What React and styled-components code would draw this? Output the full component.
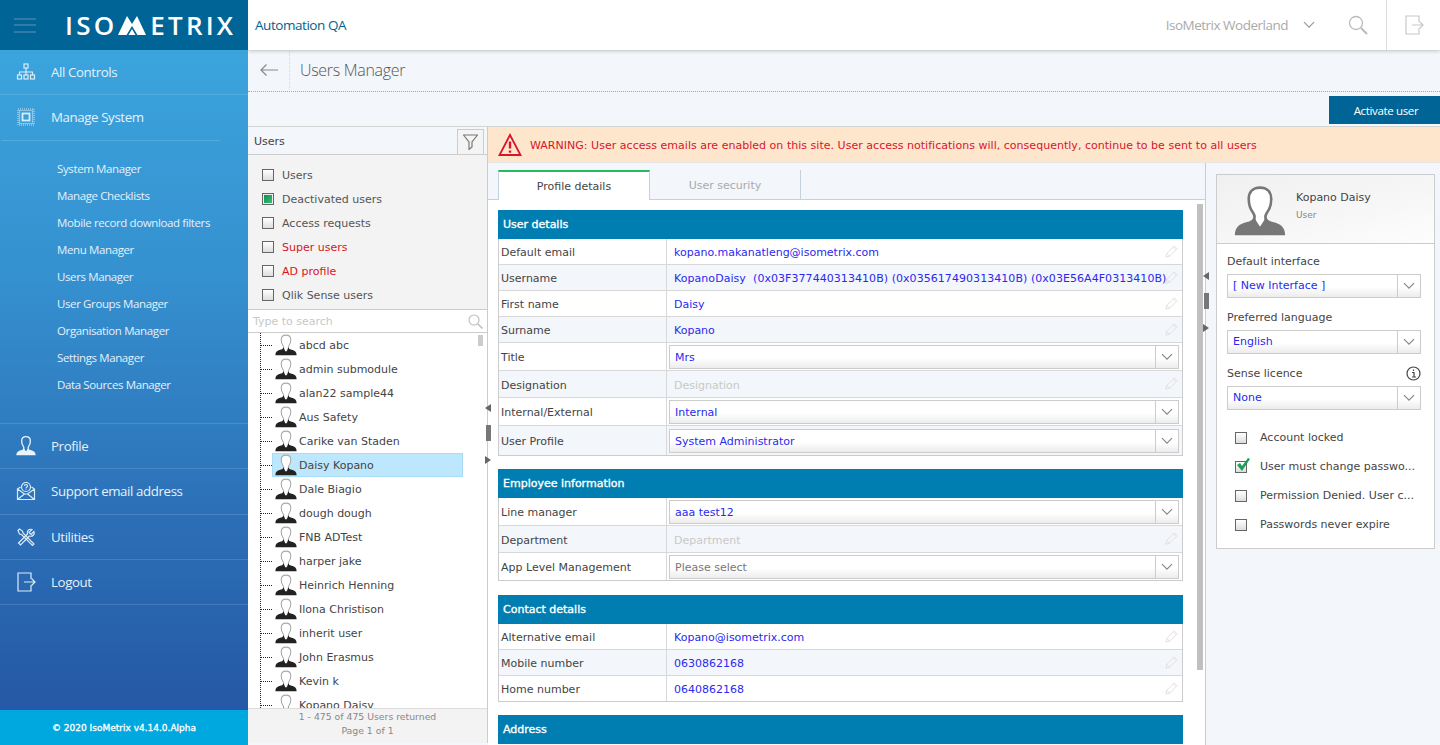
import React from "react";
import styled, { createGlobalStyle } from "styled-components";

const Global = createGlobalStyle`
  html, body { margin: 0; padding: 0; height: 100%; overflow: hidden; background: #f3f6fa; }
  * { box-sizing: border-box; }
  body { font-family: "DejaVu Sans", Verdana, sans-serif; font-size: 11px; color: #444; }
`;

const Shell = styled.div`display: flex; width: 1440px; height: 745px; overflow: hidden;`;
const Side = styled.aside`width: 248px; flex: none; display: flex; flex-direction: column; position: relative; z-index: 3;`;
const Brand = styled.div`height: 50px; background: #006596; display: flex; align-items: center; padding-left: 14px;`;
const Burger = styled.div`width: 22px; height: 15px; display: flex; flex-direction: column; justify-content: space-between; margin-right: 29px;
  span { display: block; height: 2px; background: #2f7ca6; }`;
const Logo = styled.div`display: flex; align-items: center; color: #fff; font-family: "Open Sans", sans-serif; font-weight: 600; font-size: 26px; letter-spacing: 3.2px; line-height: 1;
  svg { margin: 0 4px 0 1px; }`;
const Nav = styled.nav`flex: 1; background: linear-gradient(#3ba4dd, #3590cf 35%, #2c70b8 70%, #2558a6); font-family: "Open Sans", sans-serif; color: #e4f1fa;`;
const NavItem = styled.div`height: ${p => p.$h || 45}px; display: flex; align-items: center; padding: 0 0 ${p => p.$h ? 1 : 0}px 16px; font-size: 13.3px; letter-spacing: -0.4px; border-bottom: 1px solid ${p => p.$plain ? "transparent" : "rgba(255,255,255,.13)"};
  svg { width: 20px; height: 20px; margin-right: 15px; flex: none; }`;
const Rule = styled.div`height: 1px; width: 218px; margin-left: 2px; background: rgba(255,255,255,.15);`;
const SubMenu = styled.div`padding: 14px 0 25px 57px; border-bottom: 1px solid rgba(255,255,255,.13);`;
const SubItem = styled.div`height: 27px; line-height: 27px; font-size: 11.5px; letter-spacing: -0.38px; white-space: nowrap;`;
const Copy = styled.div`height: 35px; background: #00a8e0; color: #fff; font-size: 9px; -webkit-text-stroke: 0.3px #fff; font-family: "DejaVu Sans", sans-serif; display: flex; align-items: center; justify-content: center;`;

const Main = styled.main`flex: 1; min-width: 0; display: flex; flex-direction: column;`;
const Header = styled.header`height: 50px; flex: none; background: #fff; display: flex; align-items: center; padding-left: 7px; box-shadow: 0 1px 4px rgba(0,0,0,.22); position: relative; z-index: 2;`;
const Org = styled.div`flex: 1; font-family: "Open Sans", sans-serif; font-size: 13.5px; letter-spacing: -0.45px; color: #00628f; padding-bottom: 1px;`;
const Tenant = styled.div`font-family: "Open Sans", sans-serif; font-size: 13.5px; letter-spacing: -0.5px; color: #aaa; margin-right: 14px;`;
const HeadIcon = styled.div`display: flex; align-items: center; justify-content: center; width: ${p => p.$w}px; height: 50px; border-left: ${p => p.$line ? "1px solid #ddd" : "none"}; margin-right: ${p => p.$mr || 0}px;`;

const SubHead = styled.div`height: 42px; flex: none; display: flex; align-items: center; background: #f3f6fa; border-bottom: 1px dotted #9aa; `;
const Back = styled.div`width: 42px; height: 100%; display: flex; align-items: center; justify-content: center; border-right: 1px dotted #cdd; margin-top: -2px;`;
const Title = styled.h1`margin: 0 0 1px 10px; font: 300 16px "Open Sans", sans-serif; letter-spacing: -0.3px; color: #555;`;
const Actions = styled.div`height: 35px; flex: none; display: flex; justify-content: flex-end; padding-top: 4px; background: #f3f6fa; border-bottom: 1px solid #d4d4d4;`;
const Activate = styled.button`width: 111px; height: 28px; border: 0; padding: 0 0 0 3px; background: #006596; color: #fff; font: 400 11.5px "Open Sans", sans-serif; letter-spacing: -0.35px;`;

const Work = styled.div`flex: 1; min-height: 0; display: flex; position: relative;`;
const Left = styled.section`width: 240px; flex: none; display: flex; flex-direction: column; background: #fff; border-right: 1px solid #ccc; height: 616px; position: relative;`;
const LeftHead = styled.div`height: 28px; flex: none; display: flex; align-items: center; justify-content: space-between; padding: 1px 3px 0 6px; background: #f3f6fa; border-bottom: 1px solid #ccc;`;
const FilterTab = styled.div`width: 27px; height: 25px; margin-top: 0; margin-bottom: -1px; background: #f4f4f4; border: 1px solid #ccc; border-bottom: 0; display: flex; align-items: center; justify-content: center;`;
const Filters = styled.div`height: 155px; flex: none; background: #f3f3f3; padding-top: 8px; border-bottom: 1px solid #ccc;`;
const FilterRow = styled.label`height: 24px; display: flex; align-items: center; padding-left: 14px; gap: 8px; color: ${p => p.$red ? "#d9141e" : "#555"};`;
const Box = styled.span`width: 12px; height: 12px; flex: none; border: 1px solid #666; background: ${p => p.$on ? "linear-gradient(135deg,#0a8a4a,#3cc47c)" : "linear-gradient(#fff,#ddd)"}; ${p => p.$on ? "box-shadow: inset 0 0 0 1px #eee;" : ""} position: relative;`;
const Tick = styled.svg`position: absolute; left: -1px; top: -5px; width: 17px; height: 16px;`;
const Search = styled.div`height: 23px; flex: none; display: flex; align-items: center; justify-content: space-between; padding: 0 4px 0 5px; border-bottom: 1px solid #ccc; color: #c8c8c8;`;
const Tree = styled.div`flex: 1; min-height: 0; overflow: hidden; position: relative; margin-left: 12px; border-left: 1px dotted #222;`;
const TreeThumb = styled.div`position: absolute; right: 4px; top: 2px; width: 5px; height: 11px; background: #ccc;`;
const TreeRow = styled.div`height: 24px; display: flex; align-items: center; position: relative; width: 203px; padding-left: 14px; color: #444;
  &::before { content: ""; position: absolute; left: 0; top: 12px; width: 11px; border-top: 1px dotted #222; }
  ${p => p.$sel ? `&::after { content: ""; position: absolute; left: 11px; top: 0; bottom: 0; right: 1px; background: #bde7fd; border: 1px solid #a9dcf7; z-index: 0; }` : ""}
  > * { position: relative; z-index: 1; }
  svg { margin-right: 2px; }`;
const LeftFoot = styled.div`height: 35px; flex: none; background: #f3f3f3; border-top: 1px solid #ddd; color: #888; font-size: 9.3px; text-align: center; line-height: 14px; padding-top: 1px;`;

const Splitter = styled.div`position: absolute; left: ${p => p.$x}px; top: ${p => p.$y}px; z-index: 4; display: flex; flex-direction: column; align-items: center; width: 8px;`;
const Tri = styled.span`width: 0; height: 0; border-top: 4.5px solid transparent; border-bottom: 4.5px solid transparent; ${p => p.$dir === "l" ? "border-right: 6px solid #666;" : "border-left: 6px solid #666;"}`;
const Handle = styled.span`width: 5px; height: 16px; background: #777; margin: 13px 0 15px;`;

const Center = styled.section`flex: 1; min-width: 0; display: flex; flex-direction: column;`;
const Warning = styled.div`height: 36px; flex: none; background: #fde6cb; color: #d9142b; display: flex; align-items: center; padding: 1px 0 0 10px; gap: 8px; border-bottom: 1px solid #e6e6e6; letter-spacing: 0.025px;`;
const Under = styled.div`flex: 1; min-height: 0; display: flex;`;
const FormCol = styled.div`width: 718px; flex: none; display: flex; flex-direction: column; border-right: 1px solid #ccc; position: relative;`;
const Tabs = styled.div`height: 37px; flex: none; background: #f3f6fa; padding: 7px 0 0 10px; display: flex; border-bottom: 1px solid #c4d2dc;`;
const Tab = styled.div`width: ${p => p.$w}px; height: 30px; display: flex; align-items: center; justify-content: center; color: ${p => p.$on ? "#444" : "#aaa"}; ${p => p.$on ? "background:#fff; border-top: 2px solid #27b860; border-left: 1px solid #c4d2dc; border-right: 1px solid #c4d2dc;" : "border-right: 1px solid #c4d2dc;"}`;
const Form = styled.div`flex: 1; min-height: 0; overflow: hidden; background: #fff; padding: 10px 0 0 10px; position: relative;`;
const FormThumb = styled.div`position: absolute; right: 2px; top: 4px; width: 6px; height: 466px; background: #c0c0c0;`;
const Block = styled.div`width: 685px; margin-bottom: ${p => p.$mb || 13}px;`;
const BlockHead = styled.div`height: 29px; background: #007eb1; color: #fff; -webkit-text-stroke: 0.35px #fff; display: flex; align-items: center; padding-left: 5px;`;
const Rows = styled.div`border: 1px solid #ccc; border-top: 0;`;
const Row = styled.div`height: ${p => p.$h || 26}px; display: flex; border-bottom: 1px solid #d8d8d8; background: ${p => p.$alt ? "#f3f6fa" : "#fff"}; &:last-child { border-bottom: 0; }`;
const Label = styled.div`width: 168px; flex: none; padding: 2px 0 0 2px; display: flex; align-items: center; border-right: 1px solid #d8d8d8; color: #444;`;
const Value = styled.div`flex: 1; min-width: 0; position: relative; display: flex; align-items: center; padding: ${p => p.$ctl ? "0" : "2px"} 0 0 7px; white-space: nowrap; color: ${p => p.$muted ? "#c9c9c9" : "#2a2aee"}; letter-spacing: ${p => p.$wide ? "0.055px" : "0"};`;
const Pencil = styled.svg`position: absolute; right: 3px; top: 50%; margin-top: -8px; width: 15px; height: 15px; fill: none; stroke: #e6dcdc;`;
const SelectBox = styled.div`height: ${p => p.$h || 24}px; flex: 1; margin: ${p => p.$m || "0"}; display: flex; align-items: center; border: 1px solid #ccc; background: linear-gradient(#fff 55%, #ececec); color: ${p => p.$muted ? "#777" : "#2a2aee"}; padding-left: 5px; min-width: 0;`;
const SelectText = styled.span`flex: 1; min-width: 0; position: relative; top: ${p => p.$shift || 0}px;`;
const Caret = styled.span`width: 23px; height: 100%; flex: none; display: flex; align-items: center; justify-content: center; border-left: 1px solid #ccc;`;

const Rail = styled.aside`flex: 1; min-width: 0; padding: 11px 5px 0 10px; background: #f3f6fa;`;
const Card = styled.div`height: 375px; background: #fff; border: 1px solid #ccc;`;
const CardHead = styled.div`height: 69px; display: flex; border-bottom: 1px solid #ccc; background: linear-gradient(165deg,#f0f0f0 0%, #f7f7f7 60%, #fdfdfd 100%); padding: 10px 0 0 17px;`;
const CardName = styled.div`margin-left: 10px; padding-top: 4px; color: #444; line-height: 18px; small { display: block; font-size: 9px; line-height: 16px; color: #888; }`;
const CardBody = styled.div`padding: 8px 13px 0 10px;`;
const FieldLabel = styled.div`height: 22px; padding: 0 0 3px; display: flex; align-items: center; justify-content: space-between; color: #444; margin-top: ${p => p.$mt || 0}px;`;
const CheckList = styled.div`padding: 13px 0 0 8px;`;
const CheckRow = styled.div`height: 29px; display: flex; align-items: center; gap: 13px; color: #444; white-space: nowrap;`;

const Avatar = ({ size = 20, head = "#fff", stroke = "#aaa", body = "#222", sw = 3 }) => (
  <svg width={size} height={size} viewBox="0 0 60 60" style={{ flex: "none" }}>
    <path d="M30 3c-9 0-13 6-13 13 0 7 1 11 5 16 2 3 2 6 1 8l7 11 7-11c-1-2-1-5 1-8 4-5 5-9 5-16 0-7-4-13-13-13z" fill={head} stroke={stroke} strokeWidth={sw} />
    <path d="M1 58c0-9 5-13 13-15 5-1 8-3 10-7 1 6 3 12 6 12s5-6 6-12c2 4 5 6 10 7 8 2 13 6 13 15z" fill={body} />
  </svg>
);
const Chev = ({ c = "#888", w = 12 }) => (
  <svg width={w} height={w * 0.6} viewBox="0 0 12 7" fill="none" stroke={c} strokeWidth="1.2"><path d="M1 1l5 5 5-5" /></svg>
);
const PencilIcon = () => (
  <Pencil viewBox="0 0 16 16"><path d="M2 14l1-4 8-8 3 3-8 8z M10 3l3 3 M3 10l3 3" /></Pencil>
);
const Select = ({ children, muted }) => (
  <SelectBox $muted={muted} $h={24} $m="0 3px 0 -5px"><SelectText $shift={1}>{children}</SelectText><Caret><Chev /></Caret></SelectBox>
);

const I = { fill: "none", stroke: "#dcecf7", strokeWidth: 1.2, viewBox: "0 0 20 20" };
const IconControls = () => <svg {...I}><rect x="8" y="2" width="4" height="4" /><path d="M10 6v4M3.5 13v-3h13v3M10 10v3" /><rect x="1.5" y="13" width="4" height="4" /><rect x="8" y="13" width="4" height="4" /><rect x="14.5" y="13" width="4" height="4" /></svg>;
const IconChip = () => <svg {...I}><rect x="6.500" y="6.500" width="7" height="7" strokeWidth="1.8" /><rect x="3.500" y="3.500" width="13" height="13" strokeDasharray="1 1" /><rect x="2" y="2" width="16" height="16" strokeDasharray="1 1" strokeWidth=".9" /></svg>;
const IconProfile = () => <svg viewBox="0 0 60 60"><path d="M30 2c-9 0-13 6-13 13 0 7 1 11 5 16 2 3 2 6 1 8l7 11 7-11c-1-2-1-5 1-8 4-5 5-9 5-16 0-7-4-13-13-13z" fill="none" stroke="#e8f3fb" strokeWidth="4" /><path d="M1 58c0-9 5-13 13-15 5-1 8-3 10-7 1 6 3 12 6 12s5-6 6-12c2 4 5 6 10 7 8 2 13 6 13 15z" fill="#e8f3fb" /></svg>;
const IconMail = () => <svg {...I}><path d="M1.5 8v10.5h17V8l-3-2M4.5 6l-3 2 7 5h3l7-5M1.5 18.5l7-5.5M18.5 18.5l-7-5.5" /><circle cx="10" cy="6" r="4.5" /><path d="M8.5 5c0-2 3-2 3 0 0 1-1.500 1-1.500 2.500M10 8.500v.5" /></svg>;
const IconTools = () => <svg {...I}><path d="M2 3.500l1.500-1.500 3 2 .5 2 11 11-1.500 1.500-11-11-2-.5z" /><path d="M18 4.500l-3 3-2-2 3-3c-3-1-5.500 1.500-4.500 4.500l-9 9 2 2 9-9c3 1 5.500-1.500 4.500-4.500z" /></svg>;
const IconLogout = () => <svg {...I}><path d="M15 7V1H2v18h13v-6" /><path d="M8 10h11M15.500 6.500L19 10l-3.500 3.500" /></svg>;

const subs = ["System Manager", "Manage Checklists", "Mobile record download filters", "Menu Manager", "Users Manager", "User Groups Manager", "Organisation Manager", "Settings Manager", "Data Sources Manager"];
const filters = [["Users"], ["Deactivated users", false, true], ["Access requests"], ["Super users", true], ["AD profile", true], ["Qlik Sense users"]];
const users = ["abcd abc", "admin submodule", "alan22 sample44", "Aus Safety", "Carike van Staden", "Daisy Kopano", "Dale Biagio", "dough dough", "FNB ADTest", "harper jake", "Heinrich Henning", "Ilona Christison", "inherit user", "John Erasmus", "Kevin k", "Kopano Daisy"];

export default function App() {
  return (
    <Shell>
      <Global />
      <Side>
        <Brand>
          <Burger><span /><span /><span /></Burger>
          <Logo>ISO
            <svg width="28" height="19" viewBox="0 0 28 19"><path d="M0 19L9 0l5 8 5-8 9 19H19.500l-5.500-9-5.500 9z" fill="#fff" /><path d="M10.500 19l3.500-6 3.500 6z" fill="#fff" /></svg>
            ETRIX</Logo>
        </Brand>
        <Nav>
          <NavItem><IconControls />All Controls</NavItem>
          <NavItem $plain><IconChip />Manage System</NavItem>
          <Rule />
          <SubMenu>{subs.map(s => <SubItem key={s}>{s}</SubItem>)}</SubMenu>
          <NavItem><IconProfile />Profile</NavItem>
          <NavItem $h={46}><IconMail />Support email address</NavItem>
          <NavItem><IconTools />Utilities</NavItem>
          <NavItem><IconLogout />Logout</NavItem>
        </Nav>
        <Copy>© 2020 IsoMetrix v4.14.0.Alpha</Copy>
      </Side>
      <Main>
        <Header>
          <Org>Automation QA</Org>
          <Tenant>IsoMetrix Woderland</Tenant>
          <HeadIcon $w={14} $mr={32}><Chev c="#999" w={12} /></HeadIcon>
          <HeadIcon $w={20} $mr={18}>
            <svg width="20" height="20" viewBox="0 0 20 20" fill="none" stroke="#bbb" strokeWidth="1.300"><circle cx="8" cy="8" r="6.500" /><path d="M13 13l6 6" strokeWidth="2" /></svg>
          </HeadIcon>
          <HeadIcon $w={54} $line>
            <svg width="20" height="20" viewBox="0 0 20 20" fill="none" stroke="#c8c8c8" strokeWidth="1.200"><path d="M15 7V1H2v18h13v-6" /><path d="M8 10h11M15.500 6.500L19 10l-3.500 3.500" /></svg>
          </HeadIcon>
        </Header>
        <SubHead>
          <Back><svg width="18" height="12" viewBox="0 0 18 12" fill="none" stroke="#888" strokeWidth="1.200"><path d="M18 6H1M6.500 .5L1 6l5.500 5.500" /></svg></Back>
          <Title>Users Manager</Title>
        </SubHead>
        <Actions><Activate>Activate user</Activate></Actions>
        <Work>
          <Left>
            <LeftHead>Users
              <FilterTab><svg width="15" height="16" viewBox="0 0 15 16" fill="none" stroke="#777" strokeWidth="1.200"><path d="M.5 1h14L9 8v5l-3 2.500V8z" /></svg></FilterTab>
            </LeftHead>
            <Filters>
              {filters.map(([t, red, on]) => <FilterRow key={t} $red={red}><Box $on={on} />{t}</FilterRow>)}
            </Filters>
            <Search>Type to search
              <svg width="15" height="15" viewBox="0 0 15 15" fill="none" stroke="#bbb" strokeWidth="1.100"><circle cx="6" cy="6" r="5" /><path d="M10 10l4.500 4.500" strokeWidth="1.500" /></svg>
            </Search>
            <Tree>
              <TreeThumb />
              {users.map((u, i) => <TreeRow key={u} $sel={i === 5}><Avatar size={22} /><span>{u}</span></TreeRow>)}
            </Tree>
            <LeftFoot>1 - 475 of 475 Users returned<br />Page 1 of 1</LeftFoot>
          </Left>
          <Splitter $x={236} $y={277}><Tri $dir="l" /><Handle /><Tri $dir="r" /></Splitter>
          <Center>
            <Warning>
              <svg width="24" height="24" viewBox="0 0 24 24" fill="none" stroke="#d9142b" strokeWidth="1.800"><path d="M12 2L1.500 22h21z" /><path d="M12 8.500v7" strokeWidth="2.400" /><path d="M12 17.500v2.200" strokeWidth="2.400" /></svg>
              WARNING: User access emails are enabled on this site. User access notifications will, consequently, continue to be sent to all users
            </Warning>
            <Under>
              <FormCol>
                <Tabs><Tab $on $w={152}>Profile details</Tab><Tab $w={151}>User security</Tab></Tabs>
                <Form>
                  <FormThumb />
                  <Block>
                    <BlockHead>User details</BlockHead>
                    <Rows>
                      <Row><Label>Default email</Label><Value>kopano.makanatleng@isometrix.com<PencilIcon /></Value></Row>
                      <Row $alt><Label>Username</Label><Value $wide>KopanoDaisy&nbsp; (0x03F377440313410B) (0x035617490313410B) (0x03E56A4F0313410B)<PencilIcon /></Value></Row>
                      <Row><Label>First name</Label><Value>Daisy<PencilIcon /></Value></Row>
                      <Row $alt><Label>Surname</Label><Value>Kopano<PencilIcon /></Value></Row>
                      <Row $h={28}><Label>Title</Label><Value $ctl><Select>Mrs</Select></Value></Row>
                      <Row $alt $h={27}><Label>Designation</Label><Value $muted>Designation<PencilIcon /></Value></Row>
                      <Row $h={28}><Label>Internal/External</Label><Value $ctl><Select>Internal</Select></Value></Row>
                      <Row $alt $h={29}><Label>User Profile</Label><Value $ctl><Select>System Administrator</Select></Value></Row>
                    </Rows>
                  </Block>
                  <Block $mb={14}>
                    <BlockHead>Employee information</BlockHead>
                    <Rows>
                      <Row $h={28}><Label>Line manager</Label><Value $ctl><Select>aaa test12</Select></Value></Row>
                      <Row $alt $h={27}><Label>Department</Label><Value $muted>Department<PencilIcon /></Value></Row>
                      <Row $h={27}><Label>App Level Management</Label><Value $ctl><Select muted>Please select</Select></Value></Row>
                    </Rows>
                  </Block>
                  <Block>
                    <BlockHead>Contact details</BlockHead>
                    <Rows>
                      <Row><Label>Alternative email</Label><Value>Kopano@isometrix.com<PencilIcon /></Value></Row>
                      <Row $alt><Label>Mobile number</Label><Value>0630862168<PencilIcon /></Value></Row>
                      <Row $h={25}><Label>Home number</Label><Value>0640862168<PencilIcon /></Value></Row>
                    </Rows>
                  </Block>
                  <Block><BlockHead>Address</BlockHead></Block>
                </Form>
                <Splitter $x={714} $y={109}><Tri $dir="l" /><Handle /><Tri $dir="r" /></Splitter>
              </FormCol>
              <Rail>
                <Card>
                  <CardHead>
                    <Avatar size={52} stroke="#777" body="#777" />
                    <CardName>Kopano Daisy<small>User</small></CardName>
                  </CardHead>
                  <CardBody>
                    <FieldLabel>Default interface</FieldLabel>
                    <SelectBox><SelectText $shift={-1}>[ New Interface ]</SelectText><Caret><Chev /></Caret></SelectBox>
                    <FieldLabel $mt={10}>Preferred language</FieldLabel>
                    <SelectBox><SelectText $shift={-1}>English</SelectText><Caret><Chev /></Caret></SelectBox>
                    <FieldLabel $mt={10}>Sense licence
                      <svg width="15" height="15" viewBox="0 0 15 15" fill="none" stroke="#444" strokeWidth="1.200"><circle cx="7.500" cy="7.500" r="6.500" /><path d="M6 6.500h2V11M6 11h4M7.500 3.500v1.500" /></svg>
                    </FieldLabel>
                    <SelectBox><SelectText $shift={-1}>None</SelectText><Caret><Chev /></Caret></SelectBox>
                    <CheckList>
                      <CheckRow><Box />Account locked</CheckRow>
                      <CheckRow><Box><Tick viewBox="0 0 17 16"><path d="M2 8l3-2 2 3 6-8 2 1-8 12z" fill="#1e9e58" /></Tick></Box>User must change passwo...</CheckRow>
                      <CheckRow><Box />Permission Denied. User c...</CheckRow>
                      <CheckRow><Box />Passwords never expire</CheckRow>
                    </CheckList>
                  </CardBody>
                </Card>
              </Rail>
            </Under>
          </Center>
        </Work>
      </Main>
    </Shell>
  );
}
